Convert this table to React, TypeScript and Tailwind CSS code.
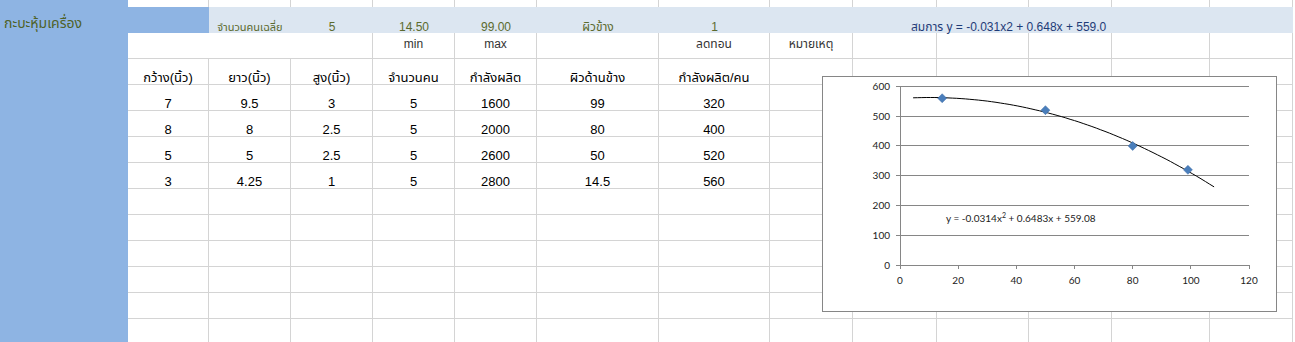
import React from "react";

const GRID_COLS =
  "grid grid-cols-[81px_82px_82px_82px_82px_122px_111px_83px_84px_92px_83px_98px_83px]";

const line = "border-[#d4d4d4]";

const headers = [
  "กว้าง(นิ้ว)",
  "ยาว(นิ้ว)",
  "สูง(นิ้ว)",
  "จำนวนคน",
  "กำลังผลิต",
  "ผิวด้านข้าง",
  "กำลังผลิต/คน",
];

const rows = [
  ["7", "9.5", "3", "5", "1600", "99", "320"],
  ["8", "8", "2.5", "5", "2000", "80", "400"],
  ["5", "5", "2.5", "5", "2600", "50", "520"],
  ["3", "4.25", "1", "5", "2800", "14.5", "560"],
];

const points = [
  { x: 14.5, y: 560 },
  { x: 50, y: 520 },
  { x: 80, y: 400 },
  { x: 99, y: 320 },
];

function Cell({ children }: { children?: React.ReactNode }) {
  return (
    <div
      className={`h-[26px] border-r border-b ${line} flex flex-col justify-end items-center whitespace-nowrap`}
    >
      <span className="block leading-none">{children}</span>
    </div>
  );
}

function DataRow({ cells }: { cells: string[] }) {
  return (
    <div className={`${GRID_COLS} h-[26px]`}>
      {Array.from({ length: 13 }).map((_, i) => (
        <Cell key={i}>{cells[i] ?? ""}</Cell>
      ))}
    </div>
  );
}

function BandCell({ children }: { children?: React.ReactNode }) {
  return (
    <div className="bg-[#dce6f1] flex flex-col justify-end items-center whitespace-nowrap">
      <span className="block leading-none">{children}</span>
    </div>
  );
}

// Scatter chart with polynomial trend line
function Chart() {
  const px = (x: number) => 77 + (x * 349) / 120;
  const py = (y: number) => 188.3 - (y * 179) / 600;
  const f = (x: number) => -0.0314 * x * x + 0.6483 * x + 559.08;

  let d = "";
  for (let x = 4.5; x <= 109; x += 1.5) {
    d += `${d ? "L" : "M"}${px(x).toFixed(1)},${py(f(x)).toFixed(1)}`;
  }

  const yTicks = [0, 100, 200, 300, 400, 500, 600];
  const xTicks = [0, 20, 40, 60, 80, 100, 120];

  return (
    <div className="absolute left-[822px] top-[76px] w-[455px] h-[236px] bg-white border border-[#868686]">
      <svg
        width="453"
        height="234"
        viewBox="0 0 453 234"
        className="font-['Lato',sans-serif]"
      >
        {yTicks.map((t) => (
          <g key={t}>
            <line
              x1={73}
              x2={426}
              y1={py(t)}
              y2={py(t)}
              stroke="#868686"
              strokeWidth="1"
              shapeRendering="crispEdges"
            />
            <text
              x={67}
              y={py(t) + 3.5}
              textAnchor="end"
              fontSize="10"
              fill="#222"
            >
              {t}
            </text>
          </g>
        ))}
        <line
          x1={77}
          x2={77}
          y1={py(600)}
          y2={py(0)}
          stroke="#868686"
          shapeRendering="crispEdges"
        />
        {xTicks.map((t) => (
          <g key={t}>
            <line
              x1={px(t)}
              x2={px(t)}
              y1={py(0)}
              y2={py(0) + 4}
              stroke="#868686"
              shapeRendering="crispEdges"
            />
            <text
              x={px(t)}
              y={207}
              textAnchor="middle"
              fontSize="10"
              fill="#222"
            >
              {t}
            </text>
          </g>
        ))}
        <path d={d} fill="none" stroke="#000" strokeWidth="1" />
        {points.map((p) => (
          <path
            key={p.x}
            d={`M${px(p.x)},${py(p.y) - 4.5}l4.5,4.5l-4.5,4.5l-4.5,-4.5z`}
            fill="#4a7ebb"
            stroke="#3c6aa5"
            strokeWidth="0.5"
          />
        ))}
        <text x={123} y={145} fontSize="10" fill="#222">
          y = -0.0314x
          <tspan fontSize="7" dy="-4">
            2
          </tspan>
          <tspan dy="4"> + 0.6483x + 559.08</tspan>
        </text>
      </svg>
    </div>
  );
}

export default function App() {
  return (
    <div className="relative w-[1295px] h-[342px] overflow-hidden bg-white flex items-start font-['Liberation_Sans','Noto_Sans_Thai',Tahoma,sans-serif] text-[13px] text-black">
      {/* Column A */}
      <div className="w-[128px] h-[342px] bg-[#8eb4e3] shrink-0 pl-[4px] pt-[14px]">
        <span className="text-[14px] leading-none text-[#4f6228]">กะบะหุ้มเครื่อง</span>
      </div>

      <div className="flex flex-col shrink-0">
        {/* partial top row */}
        <div className={`${GRID_COLS} h-[7px]`}>
          {Array.from({ length: 13 }).map((_, i) => (
            <div key={i} className={`h-[7px] border-r ${line}`} />
          ))}
        </div>

        {/* summary band */}
        <div className={`${GRID_COLS} h-[26px] text-[12px] text-[#5b6a2e]`}>
          <div className="bg-[#8eb4e3]" />
          <BandCell>
            <span className="text-[11px]">จำนวนคนเฉลี่ย</span>
          </BandCell>
          <BandCell>5</BandCell>
          <BandCell>14.50</BandCell>
          <BandCell>99.00</BandCell>
          <BandCell>ผิวข้าง</BandCell>
          <BandCell>1</BandCell>
          <div className="bg-[#dce6f1]" />
          <div className="col-span-4 bg-[#dce6f1] flex flex-col justify-end pl-[58px] whitespace-nowrap text-[#1f3c78]">
            <span className="block leading-none">
              สมการ y = -0.031x2 + 0.648x + 559.0
            </span>
          </div>
          <div className="bg-[#dce6f1]" />
        </div>

        {/* min / max row */}
        <div className={`${GRID_COLS} h-[26px] text-[12px] text-[#333]`}>
          <div className={`col-span-3 h-[26px] border-r border-b ${line}`} />
          {["min", "max", "", "ลดทอน", "หมายเหตุ", "", "", "", "", ""].map(
            (t, i) => (
              <div
                key={i}
                className={`h-[26px] border-r border-b ${line} flex justify-center pt-[5px] whitespace-nowrap`}
              >
                <span className="block leading-none">{t}</span>
              </div>
            )
          )}
        </div>

        <DataRow cells={headers} />
        {rows.map((r, i) => (
          <DataRow key={i} cells={r} />
        ))}
        {Array.from({ length: 6 }).map((_, i) => (
          <DataRow key={`e${i}`} cells={[]} />
        ))}
      </div>

      <Chart />
    </div>
  );
}
